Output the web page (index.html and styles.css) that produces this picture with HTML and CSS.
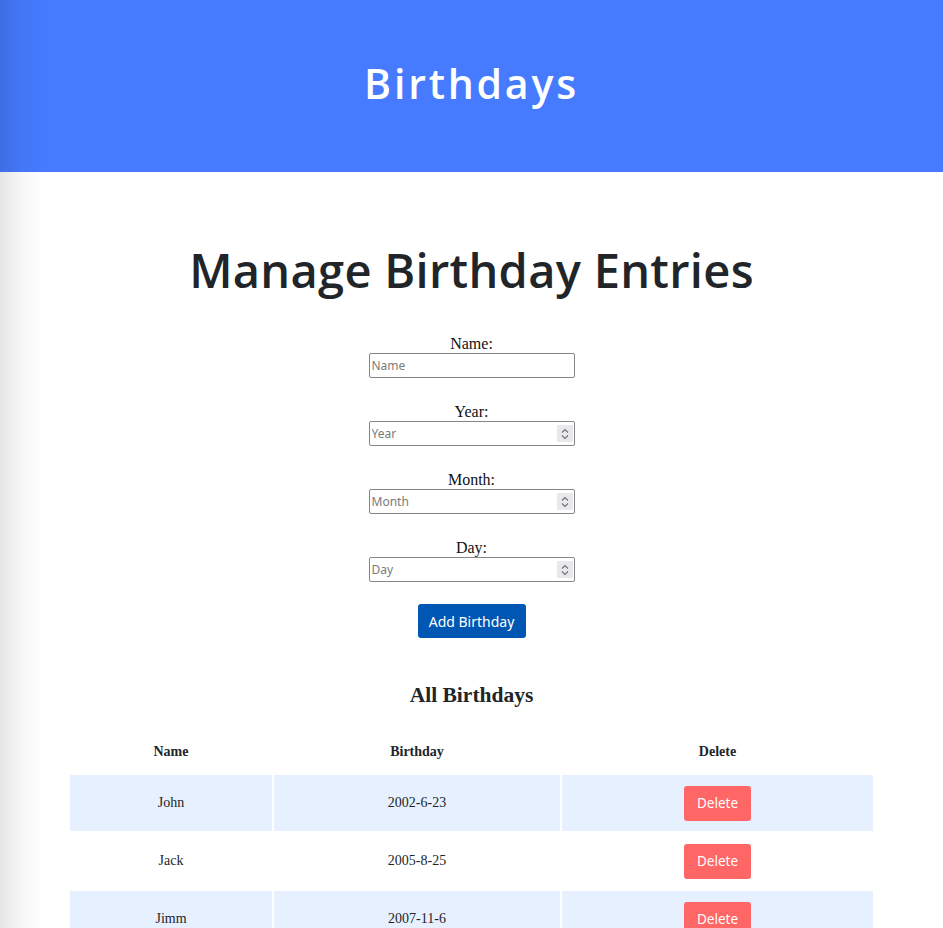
FILE: index.html
```html
<!DOCTYPE html>
<html lang="en">
<head>
<meta charset="utf-8">
<title>Birthdays</title>
<link rel="stylesheet" href="styles.css">
</head>
<body>
<div class="edge-shade"></div>
<header class="site-header">
  <h1 class="site-title">Birthdays</h1>
</header>
<main class="content">
  <h2 class="page-title">Manage Birthday Entries</h2>
  <form class="entry-form">
    <div class="field">
      <label for="name">Name:</label>
      <div class="input-wrap">
        <input id="name" type="text" placeholder="Name">
      </div>
    </div>
    <div class="field">
      <label for="year">Year:</label>
      <div class="input-wrap">
        <input id="year" type="text" inputmode="numeric" placeholder="Year">
        <span class="spin"><svg width="8" height="12" viewBox="0 0 8 12"><path d="M1 4.5 L4 1.5 L7 4.5 M1 7.5 L4 10.5 L7 7.5" fill="none" stroke="#6f6f74" stroke-width="1.1"/></svg></span>
      </div>
    </div>
    <div class="field">
      <label for="month">Month:</label>
      <div class="input-wrap">
        <input id="month" type="text" inputmode="numeric" placeholder="Month">
        <span class="spin"><svg width="8" height="12" viewBox="0 0 8 12"><path d="M1 4.5 L4 1.5 L7 4.5 M1 7.5 L4 10.5 L7 7.5" fill="none" stroke="#6f6f74" stroke-width="1.1"/></svg></span>
      </div>
    </div>
    <div class="field">
      <label for="day">Day:</label>
      <div class="input-wrap">
        <input id="day" type="text" inputmode="numeric" placeholder="Day">
        <span class="spin"><svg width="8" height="12" viewBox="0 0 8 12"><path d="M1 4.5 L4 1.5 L7 4.5 M1 7.5 L4 10.5 L7 7.5" fill="none" stroke="#6f6f74" stroke-width="1.1"/></svg></span>
      </div>
    </div>
    <button type="button" class="btn-add">Add Birthday</button>
  </form>
  <h3 class="list-title">All Birthdays</h3>
  <table class="bday-table">
    <thead>
      <tr><th class="c-name">Name</th><th class="c-date">Birthday</th><th class="c-del">Delete</th></tr>
    </thead>
    <tbody>
      <tr class="striped"><td>John</td><td>2002-6-23</td><td><button type="button" class="btn-del">Delete</button></td></tr>
      <tr><td>Jack</td><td>2005-8-25</td><td><button type="button" class="btn-del">Delete</button></td></tr>
      <tr class="striped"><td>Jimm</td><td>2007-11-6</td><td><button type="button" class="btn-del">Delete</button></td></tr>
    </tbody>
  </table>
</main>
</body>
</html>
```

FILE: styles.css
```css
html, body {
  margin: 0;
  padding: 0;
  background: #ffffff;
}
body {
  font-family: "Liberation Serif", "Times New Roman", serif;
  font-size: 16px;
  color: #212529;
}
.edge-shade {
  position: fixed;
  left: 0;
  top: 0;
  bottom: 0;
  width: 44px;
  background: linear-gradient(to right, rgba(0,0,0,0.10), rgba(0,0,0,0.03) 50%, rgba(0,0,0,0));
  pointer-events: none;
  z-index: 10;
}
.site-header {
  background: #467bff;
  height: 172px;
  box-sizing: border-box;
  padding-bottom: 6px;
  display: flex;
  align-items: center;
  justify-content: center;
}
.site-title {
  margin: 0;
  color: #ffffff;
  font-family: "Open Sans", sans-serif;
  font-weight: 600;
  font-size: 41px;
  letter-spacing: 2.8px;
}
.content {
  display: flex;
  flex-direction: column;
  align-items: center;
}
.page-title {
  margin: 68px 0 0;
  font-family: "Open Sans", sans-serif;
  font-weight: 600;
  font-size: 47px;
  line-height: 60px;
  color: #212529;
  letter-spacing: 0.3px;
}
.entry-form {
  margin-top: 34px;
  display: flex;
  flex-direction: column;
  align-items: center;
}
.field {
  display: flex;
  flex-direction: column;
  align-items: center;
  margin-bottom: 24px;
}
.field label {
  line-height: 19px;
  color: #111;
}
.input-wrap {
  position: relative;
  width: 206px;
  height: 25px;
}
.input-wrap input {
  display: block;
  width: 100%;
  height: 100%;
  box-sizing: border-box;
  border: 1px solid #858585;
  border-radius: 2px;
  padding: 1px 2px;
  font-family: "Noto Sans", sans-serif;
  font-size: 12px;
  color: #333;
}
.input-wrap input::placeholder {
  color: #7a7a7a;
}
.spin {
  position: absolute;
  right: 2px;
  top: 4px;
  width: 16px;
  height: 17px;
  background: #e9e9ed;
  border-radius: 1px;
  display: flex;
  align-items: center;
  justify-content: center;
}
.btn-add {
  margin-top: -2px;
  width: 108px;
  height: 34px;
  border: none;
  border-radius: 3px;
  background: #0056b3;
  color: #ffffff;
  font-family: "Noto Sans", sans-serif;
  font-size: 14px;
  cursor: pointer;
}
.list-title {
  margin: 45px 0 0;
  font-size: 21.5px;
  line-height: 24px;
  font-weight: bold;
}
.bday-table {
  margin-top: 22px;
  width: 807px;
  border-spacing: 2px;
  text-align: center;
}
.bday-table th {
  height: 42px;
  padding: 0;
  font-size: 14px;
  vertical-align: middle;
}
.c-name { width: 202px; }
.c-date { width: 286px; }
.bday-table td {
  height: 56px;
  padding: 0;
  font-size: 14px;
  vertical-align: middle;
}
.striped td {
  background: #e6f0fe;
}
.btn-del {
  width: 67px;
  height: 35px;
  border: none;
  border-radius: 3px;
  background: #ff6666;
  color: #ffffff;
  font-family: "Noto Sans", sans-serif;
  font-size: 13.5px;
  cursor: pointer;
}
```
